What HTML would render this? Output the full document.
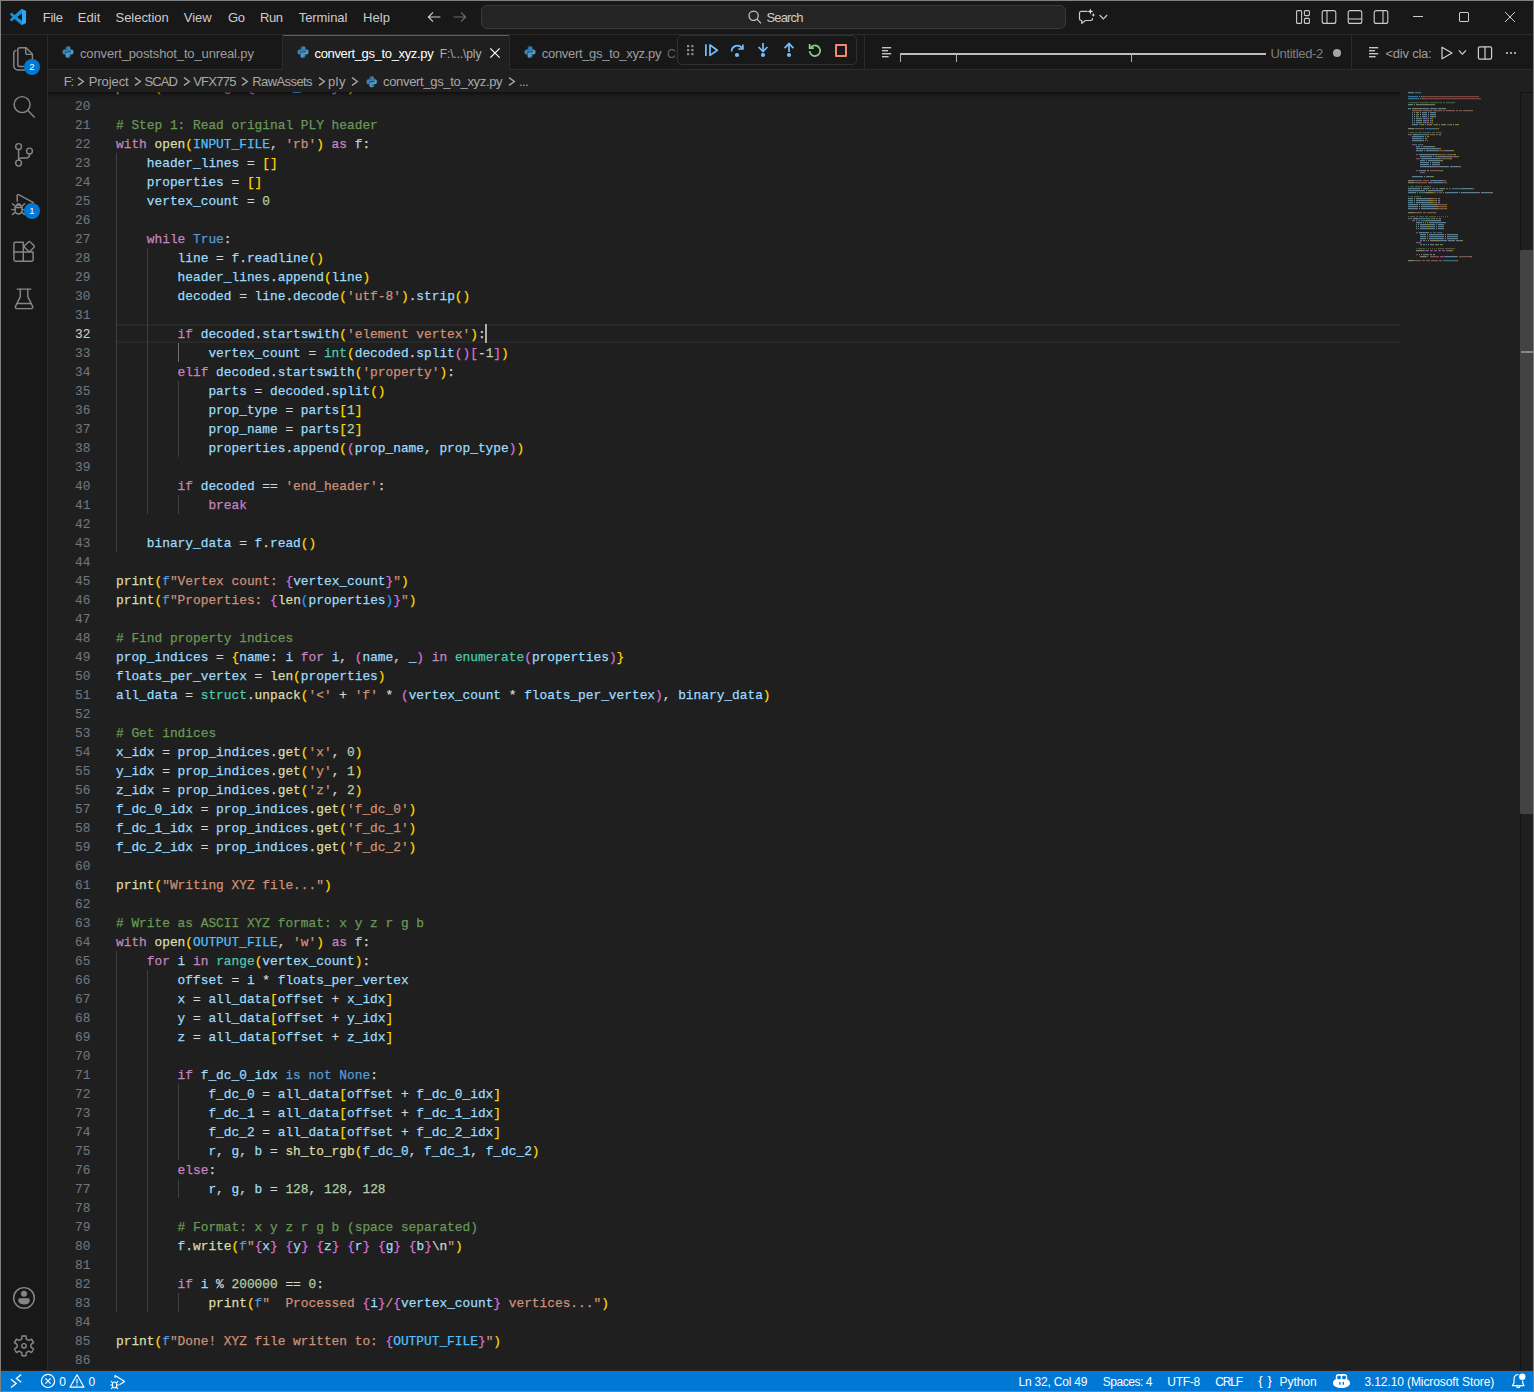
<!DOCTYPE html><html><head><meta charset="utf-8"><title>convert_gs_to_xyz.py</title><style>
*{box-sizing:border-box;margin:0;padding:0}
html,body{width:1534px;height:1392px;overflow:hidden;background:#1f1f1f}
body{font-family:"Liberation Sans",sans-serif;font-size:13px;position:relative}
#w{position:absolute;left:0;top:0;width:1534px;height:1392px;overflow:hidden;background:#1f1f1f}
.a{position:absolute}
.t{position:absolute;white-space:pre;height:20px;line-height:20px}
svg{position:absolute;overflow:visible}
#code{position:absolute;left:116px;top:77.75px;font-family:"Liberation Mono",monospace;font-size:13.5px;line-height:19px;color:#d4d4d4;white-space:pre;transform:scaleX(.9504);transform-origin:0 0;-webkit-text-stroke:.25px}
#code div{height:19px}
#ln{position:absolute;left:48px;top:77.75px;width:42.5px;text-align:right;font-family:"Liberation Mono",monospace;font-size:13.5px;line-height:19px;color:#6e7681;white-space:pre;transform:scaleX(.9504);transform-origin:100% 0;-webkit-text-stroke:.1px}
#ln div{height:19px}
.c{color:#6a9955}.k{color:#c586c0}.b{color:#569cd6}.f{color:#dcdcaa}.t2{color:#4ec9b0}.v{color:#9cdcfe}.C{color:#4fc1ff}.s{color:#ce9178}.n{color:#b5cea8}.e{color:#d4d4d4}
.b1{color:#ffd700}.b2{color:#da70d6}.b3{color:#179fff}
.g{position:absolute;width:1px;background:#404040}
</style></head><body><div id="w">
<div class="a" style="left:116px;top:324px;width:1284px;height:19px;border-top:2px solid #282828;border-bottom:2px solid #282828"></div>
<div class="g" style="left:116px;top:153px;height:399px;background:#404040"></div>
<div class="g" style="left:147px;top:248px;height:266px;background:#404040"></div>
<div class="g" style="left:178px;top:343px;height:19px;background:#707070"></div>
<div class="g" style="left:178px;top:381px;height:76px;background:#404040"></div>
<div class="g" style="left:178px;top:495px;height:19px;background:#404040"></div>
<div class="g" style="left:116px;top:951px;height:361px;background:#404040"></div>
<div class="g" style="left:147px;top:970px;height:342px;background:#404040"></div>
<div class="g" style="left:178px;top:1084px;height:76px;background:#404040"></div>
<div class="g" style="left:178px;top:1179px;height:19px;background:#404040"></div>
<div class="g" style="left:178px;top:1293px;height:19px;background:#404040"></div>
<div id="ln"><div>19</div><div>20</div><div>21</div><div>22</div><div>23</div><div>24</div><div>25</div><div>26</div><div>27</div><div>28</div><div>29</div><div>30</div><div>31</div><div style="color:#cccccc">32</div><div>33</div><div>34</div><div>35</div><div>36</div><div>37</div><div>38</div><div>39</div><div>40</div><div>41</div><div>42</div><div>43</div><div>44</div><div>45</div><div>46</div><div>47</div><div>48</div><div>49</div><div>50</div><div>51</div><div>52</div><div>53</div><div>54</div><div>55</div><div>56</div><div>57</div><div>58</div><div>59</div><div>60</div><div>61</div><div>62</div><div>63</div><div>64</div><div>65</div><div>66</div><div>67</div><div>68</div><div>69</div><div>70</div><div>71</div><div>72</div><div>73</div><div>74</div><div>75</div><div>76</div><div>77</div><div>78</div><div>79</div><div>80</div><div>81</div><div>82</div><div>83</div><div>84</div><div>85</div><div>86</div></div>
<div id="code"><div><span class="f">print</span><span class="b1">(</span><span class="b">f</span><span class="s">"Reading: </span><span class="b2">{</span><span class="C">INPUT_FILE</span><span class="b2">}</span><span class="s">"</span><span class="b1">)</span></div><div></div><div><span class="c"># Step 1: Read original PLY header</span></div><div><span class="k">with</span> <span class="f">open</span><span class="b1">(</span><span class="C">INPUT_FILE</span>, <span class="s">'rb'</span><span class="b1">)</span> <span class="k">as</span> <span class="v">f</span>:</div><div>    <span class="v">header_lines</span> = <span class="b1">[]</span></div><div>    <span class="v">properties</span> = <span class="b1">[]</span></div><div>    <span class="v">vertex_count</span> = <span class="n">0</span></div><div></div><div>    <span class="k">while</span> <span class="b">True</span>:</div><div>        <span class="v">line</span> = <span class="v">f</span>.<span class="v">readline</span><span class="b1">()</span></div><div>        <span class="v">header_lines</span>.<span class="v">append</span><span class="b1">(</span><span class="v">line</span><span class="b1">)</span></div><div>        <span class="v">decoded</span> = <span class="v">line</span>.<span class="v">decode</span><span class="b1">(</span><span class="s">'utf-8'</span><span class="b1">)</span>.<span class="v">strip</span><span class="b1">()</span></div><div></div><div>        <span class="k">if</span> <span class="v">decoded</span>.<span class="v">startswith</span><span class="b1">(</span><span class="s">'element vertex'</span><span class="b1">)</span>:</div><div>            <span class="v">vertex_count</span> = <span class="t2">int</span><span class="b1">(</span><span class="v">decoded</span>.<span class="v">split</span><span class="b2">()[</span>-<span class="n">1</span><span class="b2">]</span><span class="b1">)</span></div><div>        <span class="k">elif</span> <span class="v">decoded</span>.<span class="v">startswith</span><span class="b1">(</span><span class="s">'property'</span><span class="b1">)</span>:</div><div>            <span class="v">parts</span> = <span class="v">decoded</span>.<span class="v">split</span><span class="b1">()</span></div><div>            <span class="v">prop_type</span> = <span class="v">parts</span><span class="b1">[</span><span class="n">1</span><span class="b1">]</span></div><div>            <span class="v">prop_name</span> = <span class="v">parts</span><span class="b1">[</span><span class="n">2</span><span class="b1">]</span></div><div>            <span class="v">properties</span>.<span class="v">append</span><span class="b1">(</span><span class="b2">(</span><span class="v">prop_name</span>, <span class="v">prop_type</span><span class="b2">)</span><span class="b1">)</span></div><div></div><div>        <span class="k">if</span> <span class="v">decoded</span> == <span class="s">'end_header'</span>:</div><div>            <span class="k">break</span></div><div></div><div>    <span class="v">binary_data</span> = <span class="v">f</span>.<span class="v">read</span><span class="b1">()</span></div><div></div><div><span class="f">print</span><span class="b1">(</span><span class="b">f</span><span class="s">"Vertex count: </span><span class="b2">{</span><span class="v">vertex_count</span><span class="b2">}</span><span class="s">"</span><span class="b1">)</span></div><div><span class="f">print</span><span class="b1">(</span><span class="b">f</span><span class="s">"Properties: </span><span class="b2">{</span><span class="f">len</span><span class="b3">(</span><span class="v">properties</span><span class="b3">)</span><span class="b2">}</span><span class="s">"</span><span class="b1">)</span></div><div></div><div><span class="c"># Find property indices</span></div><div><span class="v">prop_indices</span> = <span class="b1">{</span><span class="v">name</span>: <span class="v">i</span> <span class="k">for</span> <span class="v">i</span>, <span class="b2">(</span><span class="v">name</span>, <span class="v">_</span><span class="b2">)</span> <span class="k">in</span> <span class="t2">enumerate</span><span class="b2">(</span><span class="v">properties</span><span class="b2">)</span><span class="b1">}</span></div><div><span class="v">floats_per_vertex</span> = <span class="f">len</span><span class="b1">(</span><span class="v">properties</span><span class="b1">)</span></div><div><span class="v">all_data</span> = <span class="t2">struct</span>.<span class="f">unpack</span><span class="b1">(</span><span class="s">'&lt;'</span> + <span class="s">'f'</span> * <span class="b2">(</span><span class="v">vertex_count</span> * <span class="v">floats_per_vertex</span><span class="b2">)</span>, <span class="v">binary_data</span><span class="b1">)</span></div><div></div><div><span class="c"># Get indices</span></div><div><span class="v">x_idx</span> = <span class="v">prop_indices</span>.<span class="f">get</span><span class="b1">(</span><span class="s">'x'</span>, <span class="n">0</span><span class="b1">)</span></div><div><span class="v">y_idx</span> = <span class="v">prop_indices</span>.<span class="f">get</span><span class="b1">(</span><span class="s">'y'</span>, <span class="n">1</span><span class="b1">)</span></div><div><span class="v">z_idx</span> = <span class="v">prop_indices</span>.<span class="f">get</span><span class="b1">(</span><span class="s">'z'</span>, <span class="n">2</span><span class="b1">)</span></div><div><span class="v">f_dc_0_idx</span> = <span class="v">prop_indices</span>.<span class="f">get</span><span class="b1">(</span><span class="s">'f_dc_0'</span><span class="b1">)</span></div><div><span class="v">f_dc_1_idx</span> = <span class="v">prop_indices</span>.<span class="f">get</span><span class="b1">(</span><span class="s">'f_dc_1'</span><span class="b1">)</span></div><div><span class="v">f_dc_2_idx</span> = <span class="v">prop_indices</span>.<span class="f">get</span><span class="b1">(</span><span class="s">'f_dc_2'</span><span class="b1">)</span></div><div></div><div><span class="f">print</span><span class="b1">(</span><span class="s">"Writing XYZ file..."</span><span class="b1">)</span></div><div></div><div><span class="c"># Write as ASCII XYZ format: x y z r g b</span></div><div><span class="k">with</span> <span class="f">open</span><span class="b1">(</span><span class="C">OUTPUT_FILE</span>, <span class="s">'w'</span><span class="b1">)</span> <span class="k">as</span> <span class="v">f</span>:</div><div>    <span class="k">for</span> <span class="v">i</span> <span class="k">in</span> <span class="t2">range</span><span class="b1">(</span><span class="v">vertex_count</span><span class="b1">)</span>:</div><div>        <span class="v">offset</span> = <span class="v">i</span> * <span class="v">floats_per_vertex</span></div><div>        <span class="v">x</span> = <span class="v">all_data</span><span class="b1">[</span><span class="v">offset</span> + <span class="v">x_idx</span><span class="b1">]</span></div><div>        <span class="v">y</span> = <span class="v">all_data</span><span class="b1">[</span><span class="v">offset</span> + <span class="v">y_idx</span><span class="b1">]</span></div><div>        <span class="v">z</span> = <span class="v">all_data</span><span class="b1">[</span><span class="v">offset</span> + <span class="v">z_idx</span><span class="b1">]</span></div><div></div><div>        <span class="k">if</span> <span class="v">f_dc_0_idx</span> <span class="b">is</span> <span class="b">not</span> <span class="b">None</span>:</div><div>            <span class="v">f_dc_0</span> = <span class="v">all_data</span><span class="b1">[</span><span class="v">offset</span> + <span class="v">f_dc_0_idx</span><span class="b1">]</span></div><div>            <span class="v">f_dc_1</span> = <span class="v">all_data</span><span class="b1">[</span><span class="v">offset</span> + <span class="v">f_dc_1_idx</span><span class="b1">]</span></div><div>            <span class="v">f_dc_2</span> = <span class="v">all_data</span><span class="b1">[</span><span class="v">offset</span> + <span class="v">f_dc_2_idx</span><span class="b1">]</span></div><div>            <span class="v">r</span>, <span class="v">g</span>, <span class="v">b</span> = <span class="f">sh_to_rgb</span><span class="b1">(</span><span class="v">f_dc_0</span>, <span class="v">f_dc_1</span>, <span class="v">f_dc_2</span><span class="b1">)</span></div><div>        <span class="k">else</span>:</div><div>            <span class="v">r</span>, <span class="v">g</span>, <span class="v">b</span> = <span class="n">128</span>, <span class="n">128</span>, <span class="n">128</span></div><div></div><div>        <span class="c"># Format: x y z r g b (space separated)</span></div><div>        <span class="v">f</span>.<span class="f">write</span><span class="b1">(</span><span class="b">f</span><span class="s">"</span><span class="b2">{</span><span class="v">x</span><span class="b2">}</span><span class="s"> </span><span class="b2">{</span><span class="v">y</span><span class="b2">}</span><span class="s"> </span><span class="b2">{</span><span class="v">z</span><span class="b2">}</span><span class="s"> </span><span class="b2">{</span><span class="v">r</span><span class="b2">}</span><span class="s"> </span><span class="b2">{</span><span class="v">g</span><span class="b2">}</span><span class="s"> </span><span class="b2">{</span><span class="v">b</span><span class="b2">}</span><span class="e">\n</span><span class="s">"</span><span class="b1">)</span></div><div></div><div>        <span class="k">if</span> <span class="v">i</span> % <span class="n">200000</span> == <span class="n">0</span>:</div><div>            <span class="f">print</span><span class="b1">(</span><span class="b">f</span><span class="s">"  Processed </span><span class="b2">{</span><span class="v">i</span><span class="b2">}</span><span class="s">/</span><span class="b2">{</span><span class="v">vertex_count</span><span class="b2">}</span><span class="s"> vertices..."</span><span class="b1">)</span></div><div></div><div><span class="f">print</span><span class="b1">(</span><span class="b">f</span><span class="s">"Done! XYZ file written to: </span><span class="b2">{</span><span class="C">OUTPUT_FILE</span><span class="b2">}</span><span class="s">"</span><span class="b1">)</span></div><div></div></div>
<div class="a" style="left:485px;top:324px;width:2px;height:19px;background:#aeafad"></div>
<svg style="left:1408px;top:92px;opacity:.5" width="110" height="180"><rect x="0" y="0" width="6" height="1.25" fill="#9cdcfe"/><rect x="7" y="0" width="6" height="1.25" fill="#4ec9b0"/><rect x="0" y="4" width="10" height="1.25" fill="#4fc1ff"/><rect x="11" y="4" width="1" height="1.25" fill="#d4d4d4"/><rect x="13" y="4" width="1" height="1.25" fill="#9cdcfe"/><rect x="14" y="4" width="57" height="1.25" fill="#d16969"/><rect x="0" y="6" width="11" height="1.25" fill="#4fc1ff"/><rect x="12" y="6" width="1" height="1.25" fill="#d4d4d4"/><rect x="14" y="6" width="1" height="1.25" fill="#9cdcfe"/><rect x="15" y="6" width="58" height="1.25" fill="#d16969"/><rect x="0" y="10" width="1" height="1.25" fill="#6a9955"/><rect x="2" y="10" width="9" height="1.25" fill="#6a9955"/><rect x="12" y="10" width="9" height="1.25" fill="#6a9955"/><rect x="22" y="10" width="8" height="1.25" fill="#6a9955"/><rect x="31" y="10" width="3" height="1.25" fill="#6a9955"/><rect x="35" y="10" width="2" height="1.25" fill="#6a9955"/><rect x="38" y="10" width="9" height="1.25" fill="#6a9955"/><rect x="0" y="12" width="5" height="1.25" fill="#9cdcfe"/><rect x="6" y="12" width="1" height="1.25" fill="#d4d4d4"/><rect x="8" y="12" width="1" height="1.25" fill="#b5cea8"/><rect x="9" y="12" width="1" height="1.25" fill="#d4d4d4"/><rect x="10" y="12" width="17" height="1.25" fill="#b5cea8"/><rect x="0" y="16" width="3" height="1.25" fill="#9cdcfe"/><rect x="4" y="16" width="9" height="1.25" fill="#dcdcaa"/><rect x="13" y="16" width="1" height="1.25" fill="#ffd700"/><rect x="14" y="16" width="6" height="1.25" fill="#9cdcfe"/><rect x="20" y="16" width="1" height="1.25" fill="#d4d4d4"/><rect x="22" y="16" width="6" height="1.25" fill="#9cdcfe"/><rect x="28" y="16" width="1" height="1.25" fill="#d4d4d4"/><rect x="30" y="16" width="6" height="1.25" fill="#9cdcfe"/><rect x="36" y="16" width="1" height="1.25" fill="#ffd700"/><rect x="37" y="16" width="1" height="1.25" fill="#d4d4d4"/><rect x="4" y="18" width="10" height="1.25" fill="#ce9178"/><rect x="15" y="18" width="9" height="1.25" fill="#ce9178"/><rect x="25" y="18" width="9" height="1.25" fill="#ce9178"/><rect x="35" y="18" width="2" height="1.25" fill="#ce9178"/><rect x="38" y="18" width="9" height="1.25" fill="#ce9178"/><rect x="48" y="18" width="2" height="1.25" fill="#ce9178"/><rect x="51" y="18" width="3" height="1.25" fill="#ce9178"/><rect x="55" y="18" width="10" height="1.25" fill="#ce9178"/><rect x="4" y="20" width="1" height="1.25" fill="#9cdcfe"/><rect x="6" y="20" width="1" height="1.25" fill="#d4d4d4"/><rect x="8" y="20" width="1" height="1.25" fill="#b5cea8"/><rect x="9" y="20" width="1" height="1.25" fill="#d4d4d4"/><rect x="10" y="20" width="1" height="1.25" fill="#b5cea8"/><rect x="12" y="20" width="1" height="1.25" fill="#d4d4d4"/><rect x="14" y="20" width="5" height="1.25" fill="#9cdcfe"/><rect x="20" y="20" width="1" height="1.25" fill="#d4d4d4"/><rect x="22" y="20" width="6" height="1.25" fill="#9cdcfe"/><rect x="4" y="22" width="1" height="1.25" fill="#9cdcfe"/><rect x="6" y="22" width="1" height="1.25" fill="#d4d4d4"/><rect x="8" y="22" width="1" height="1.25" fill="#b5cea8"/><rect x="9" y="22" width="1" height="1.25" fill="#d4d4d4"/><rect x="10" y="22" width="1" height="1.25" fill="#b5cea8"/><rect x="12" y="22" width="1" height="1.25" fill="#d4d4d4"/><rect x="14" y="22" width="5" height="1.25" fill="#9cdcfe"/><rect x="20" y="22" width="1" height="1.25" fill="#d4d4d4"/><rect x="22" y="22" width="6" height="1.25" fill="#9cdcfe"/><rect x="4" y="24" width="1" height="1.25" fill="#9cdcfe"/><rect x="6" y="24" width="1" height="1.25" fill="#d4d4d4"/><rect x="8" y="24" width="1" height="1.25" fill="#b5cea8"/><rect x="9" y="24" width="1" height="1.25" fill="#d4d4d4"/><rect x="10" y="24" width="1" height="1.25" fill="#b5cea8"/><rect x="12" y="24" width="1" height="1.25" fill="#d4d4d4"/><rect x="14" y="24" width="5" height="1.25" fill="#9cdcfe"/><rect x="20" y="24" width="1" height="1.25" fill="#d4d4d4"/><rect x="22" y="24" width="6" height="1.25" fill="#9cdcfe"/><rect x="4" y="26" width="1" height="1.25" fill="#9cdcfe"/><rect x="6" y="26" width="1" height="1.25" fill="#d4d4d4"/><rect x="8" y="26" width="3" height="1.25" fill="#9cdcfe"/><rect x="11" y="26" width="1" height="1.25" fill="#ffd700"/><rect x="12" y="26" width="1" height="1.25" fill="#b5cea8"/><rect x="13" y="26" width="1" height="1.25" fill="#d4d4d4"/><rect x="15" y="26" width="3" height="1.25" fill="#9cdcfe"/><rect x="18" y="26" width="1" height="1.25" fill="#da70d6"/><rect x="19" y="26" width="1" height="1.25" fill="#b5cea8"/><rect x="20" y="26" width="1" height="1.25" fill="#d4d4d4"/><rect x="22" y="26" width="1" height="1.25" fill="#9cdcfe"/><rect x="23" y="26" width="1" height="1.25" fill="#da70d6"/><rect x="24" y="26" width="1" height="1.25" fill="#ffd700"/><rect x="4" y="28" width="1" height="1.25" fill="#9cdcfe"/><rect x="6" y="28" width="1" height="1.25" fill="#d4d4d4"/><rect x="8" y="28" width="3" height="1.25" fill="#9cdcfe"/><rect x="11" y="28" width="1" height="1.25" fill="#ffd700"/><rect x="12" y="28" width="1" height="1.25" fill="#b5cea8"/><rect x="13" y="28" width="1" height="1.25" fill="#d4d4d4"/><rect x="15" y="28" width="3" height="1.25" fill="#9cdcfe"/><rect x="18" y="28" width="1" height="1.25" fill="#da70d6"/><rect x="19" y="28" width="1" height="1.25" fill="#b5cea8"/><rect x="20" y="28" width="1" height="1.25" fill="#d4d4d4"/><rect x="22" y="28" width="1" height="1.25" fill="#9cdcfe"/><rect x="23" y="28" width="1" height="1.25" fill="#da70d6"/><rect x="24" y="28" width="1" height="1.25" fill="#ffd700"/><rect x="4" y="30" width="1" height="1.25" fill="#9cdcfe"/><rect x="6" y="30" width="1" height="1.25" fill="#d4d4d4"/><rect x="8" y="30" width="3" height="1.25" fill="#9cdcfe"/><rect x="11" y="30" width="1" height="1.25" fill="#ffd700"/><rect x="12" y="30" width="1" height="1.25" fill="#b5cea8"/><rect x="13" y="30" width="1" height="1.25" fill="#d4d4d4"/><rect x="15" y="30" width="3" height="1.25" fill="#9cdcfe"/><rect x="18" y="30" width="1" height="1.25" fill="#da70d6"/><rect x="19" y="30" width="1" height="1.25" fill="#b5cea8"/><rect x="20" y="30" width="1" height="1.25" fill="#d4d4d4"/><rect x="22" y="30" width="1" height="1.25" fill="#9cdcfe"/><rect x="23" y="30" width="1" height="1.25" fill="#da70d6"/><rect x="24" y="30" width="1" height="1.25" fill="#ffd700"/><rect x="4" y="32" width="6" height="1.25" fill="#9cdcfe"/><rect x="11" y="32" width="3" height="1.25" fill="#4ec9b0"/><rect x="14" y="32" width="1" height="1.25" fill="#ffd700"/><rect x="15" y="32" width="1" height="1.25" fill="#9cdcfe"/><rect x="17" y="32" width="1" height="1.25" fill="#d4d4d4"/><rect x="19" y="32" width="3" height="1.25" fill="#b5cea8"/><rect x="22" y="32" width="1" height="1.25" fill="#ffd700"/><rect x="23" y="32" width="1" height="1.25" fill="#d4d4d4"/><rect x="25" y="32" width="3" height="1.25" fill="#4ec9b0"/><rect x="28" y="32" width="1" height="1.25" fill="#ffd700"/><rect x="29" y="32" width="1" height="1.25" fill="#9cdcfe"/><rect x="31" y="32" width="1" height="1.25" fill="#d4d4d4"/><rect x="33" y="32" width="3" height="1.25" fill="#b5cea8"/><rect x="36" y="32" width="1" height="1.25" fill="#ffd700"/><rect x="37" y="32" width="1" height="1.25" fill="#d4d4d4"/><rect x="39" y="32" width="3" height="1.25" fill="#4ec9b0"/><rect x="42" y="32" width="1" height="1.25" fill="#ffd700"/><rect x="43" y="32" width="1" height="1.25" fill="#9cdcfe"/><rect x="45" y="32" width="1" height="1.25" fill="#d4d4d4"/><rect x="47" y="32" width="3" height="1.25" fill="#b5cea8"/><rect x="50" y="32" width="1" height="1.25" fill="#ffd700"/><rect x="0" y="36" width="5" height="1.25" fill="#dcdcaa"/><rect x="5" y="36" width="1" height="1.25" fill="#ffd700"/><rect x="6" y="36" width="1" height="1.25" fill="#569cd6"/><rect x="7" y="36" width="9" height="1.25" fill="#ce9178"/><rect x="17" y="36" width="1" height="1.25" fill="#da70d6"/><rect x="18" y="36" width="10" height="1.25" fill="#4fc1ff"/><rect x="28" y="36" width="1" height="1.25" fill="#da70d6"/><rect x="29" y="36" width="1" height="1.25" fill="#ce9178"/><rect x="30" y="36" width="1" height="1.25" fill="#ffd700"/><rect x="0" y="40" width="1" height="1.25" fill="#6a9955"/><rect x="2" y="40" width="4" height="1.25" fill="#6a9955"/><rect x="7" y="40" width="2" height="1.25" fill="#6a9955"/><rect x="10" y="40" width="4" height="1.25" fill="#6a9955"/><rect x="15" y="40" width="8" height="1.25" fill="#6a9955"/><rect x="24" y="40" width="3" height="1.25" fill="#6a9955"/><rect x="28" y="40" width="6" height="1.25" fill="#6a9955"/><rect x="0" y="42" width="4" height="1.25" fill="#c586c0"/><rect x="5" y="42" width="4" height="1.25" fill="#dcdcaa"/><rect x="9" y="42" width="1" height="1.25" fill="#ffd700"/><rect x="10" y="42" width="10" height="1.25" fill="#4fc1ff"/><rect x="20" y="42" width="1" height="1.25" fill="#d4d4d4"/><rect x="22" y="42" width="4" height="1.25" fill="#ce9178"/><rect x="26" y="42" width="1" height="1.25" fill="#ffd700"/><rect x="28" y="42" width="2" height="1.25" fill="#c586c0"/><rect x="31" y="42" width="1" height="1.25" fill="#9cdcfe"/><rect x="32" y="42" width="1" height="1.25" fill="#d4d4d4"/><rect x="4" y="44" width="12" height="1.25" fill="#9cdcfe"/><rect x="17" y="44" width="1" height="1.25" fill="#d4d4d4"/><rect x="19" y="44" width="2" height="1.25" fill="#ffd700"/><rect x="4" y="46" width="10" height="1.25" fill="#9cdcfe"/><rect x="15" y="46" width="1" height="1.25" fill="#d4d4d4"/><rect x="17" y="46" width="2" height="1.25" fill="#ffd700"/><rect x="4" y="48" width="12" height="1.25" fill="#9cdcfe"/><rect x="17" y="48" width="1" height="1.25" fill="#d4d4d4"/><rect x="19" y="48" width="1" height="1.25" fill="#b5cea8"/><rect x="4" y="52" width="5" height="1.25" fill="#c586c0"/><rect x="10" y="52" width="4" height="1.25" fill="#569cd6"/><rect x="14" y="52" width="1" height="1.25" fill="#d4d4d4"/><rect x="8" y="54" width="4" height="1.25" fill="#9cdcfe"/><rect x="13" y="54" width="1" height="1.25" fill="#d4d4d4"/><rect x="15" y="54" width="1" height="1.25" fill="#9cdcfe"/><rect x="16" y="54" width="1" height="1.25" fill="#d4d4d4"/><rect x="17" y="54" width="8" height="1.25" fill="#9cdcfe"/><rect x="25" y="54" width="2" height="1.25" fill="#ffd700"/><rect x="8" y="56" width="12" height="1.25" fill="#9cdcfe"/><rect x="20" y="56" width="1" height="1.25" fill="#d4d4d4"/><rect x="21" y="56" width="6" height="1.25" fill="#9cdcfe"/><rect x="27" y="56" width="1" height="1.25" fill="#ffd700"/><rect x="28" y="56" width="4" height="1.25" fill="#9cdcfe"/><rect x="32" y="56" width="1" height="1.25" fill="#ffd700"/><rect x="8" y="58" width="7" height="1.25" fill="#9cdcfe"/><rect x="16" y="58" width="1" height="1.25" fill="#d4d4d4"/><rect x="18" y="58" width="4" height="1.25" fill="#9cdcfe"/><rect x="22" y="58" width="1" height="1.25" fill="#d4d4d4"/><rect x="23" y="58" width="6" height="1.25" fill="#9cdcfe"/><rect x="29" y="58" width="1" height="1.25" fill="#ffd700"/><rect x="30" y="58" width="7" height="1.25" fill="#ce9178"/><rect x="37" y="58" width="1" height="1.25" fill="#ffd700"/><rect x="38" y="58" width="1" height="1.25" fill="#d4d4d4"/><rect x="39" y="58" width="5" height="1.25" fill="#9cdcfe"/><rect x="44" y="58" width="2" height="1.25" fill="#ffd700"/><rect x="8" y="62" width="2" height="1.25" fill="#c586c0"/><rect x="11" y="62" width="7" height="1.25" fill="#9cdcfe"/><rect x="18" y="62" width="1" height="1.25" fill="#d4d4d4"/><rect x="19" y="62" width="10" height="1.25" fill="#9cdcfe"/><rect x="29" y="62" width="1" height="1.25" fill="#ffd700"/><rect x="30" y="62" width="8" height="1.25" fill="#ce9178"/><rect x="39" y="62" width="7" height="1.25" fill="#ce9178"/><rect x="46" y="62" width="1" height="1.25" fill="#ffd700"/><rect x="47" y="62" width="1" height="1.25" fill="#d4d4d4"/><rect x="12" y="64" width="12" height="1.25" fill="#9cdcfe"/><rect x="25" y="64" width="1" height="1.25" fill="#d4d4d4"/><rect x="27" y="64" width="3" height="1.25" fill="#4ec9b0"/><rect x="30" y="64" width="1" height="1.25" fill="#ffd700"/><rect x="31" y="64" width="7" height="1.25" fill="#9cdcfe"/><rect x="38" y="64" width="1" height="1.25" fill="#d4d4d4"/><rect x="39" y="64" width="5" height="1.25" fill="#9cdcfe"/><rect x="44" y="64" width="3" height="1.25" fill="#da70d6"/><rect x="47" y="64" width="1" height="1.25" fill="#d4d4d4"/><rect x="48" y="64" width="1" height="1.25" fill="#b5cea8"/><rect x="49" y="64" width="1" height="1.25" fill="#da70d6"/><rect x="50" y="64" width="1" height="1.25" fill="#ffd700"/><rect x="8" y="66" width="4" height="1.25" fill="#c586c0"/><rect x="13" y="66" width="7" height="1.25" fill="#9cdcfe"/><rect x="20" y="66" width="1" height="1.25" fill="#d4d4d4"/><rect x="21" y="66" width="10" height="1.25" fill="#9cdcfe"/><rect x="31" y="66" width="1" height="1.25" fill="#ffd700"/><rect x="32" y="66" width="10" height="1.25" fill="#ce9178"/><rect x="42" y="66" width="1" height="1.25" fill="#ffd700"/><rect x="43" y="66" width="1" height="1.25" fill="#d4d4d4"/><rect x="12" y="68" width="5" height="1.25" fill="#9cdcfe"/><rect x="18" y="68" width="1" height="1.25" fill="#d4d4d4"/><rect x="20" y="68" width="7" height="1.25" fill="#9cdcfe"/><rect x="27" y="68" width="1" height="1.25" fill="#d4d4d4"/><rect x="28" y="68" width="5" height="1.25" fill="#9cdcfe"/><rect x="33" y="68" width="2" height="1.25" fill="#ffd700"/><rect x="12" y="70" width="9" height="1.25" fill="#9cdcfe"/><rect x="22" y="70" width="1" height="1.25" fill="#d4d4d4"/><rect x="24" y="70" width="5" height="1.25" fill="#9cdcfe"/><rect x="29" y="70" width="1" height="1.25" fill="#ffd700"/><rect x="30" y="70" width="1" height="1.25" fill="#b5cea8"/><rect x="31" y="70" width="1" height="1.25" fill="#ffd700"/><rect x="12" y="72" width="9" height="1.25" fill="#9cdcfe"/><rect x="22" y="72" width="1" height="1.25" fill="#d4d4d4"/><rect x="24" y="72" width="5" height="1.25" fill="#9cdcfe"/><rect x="29" y="72" width="1" height="1.25" fill="#ffd700"/><rect x="30" y="72" width="1" height="1.25" fill="#b5cea8"/><rect x="31" y="72" width="1" height="1.25" fill="#ffd700"/><rect x="12" y="74" width="10" height="1.25" fill="#9cdcfe"/><rect x="22" y="74" width="1" height="1.25" fill="#d4d4d4"/><rect x="23" y="74" width="6" height="1.25" fill="#9cdcfe"/><rect x="29" y="74" width="1" height="1.25" fill="#ffd700"/><rect x="30" y="74" width="1" height="1.25" fill="#da70d6"/><rect x="31" y="74" width="9" height="1.25" fill="#9cdcfe"/><rect x="40" y="74" width="1" height="1.25" fill="#d4d4d4"/><rect x="42" y="74" width="9" height="1.25" fill="#9cdcfe"/><rect x="51" y="74" width="1" height="1.25" fill="#da70d6"/><rect x="52" y="74" width="1" height="1.25" fill="#ffd700"/><rect x="8" y="78" width="2" height="1.25" fill="#c586c0"/><rect x="11" y="78" width="7" height="1.25" fill="#9cdcfe"/><rect x="19" y="78" width="2" height="1.25" fill="#d4d4d4"/><rect x="22" y="78" width="12" height="1.25" fill="#ce9178"/><rect x="34" y="78" width="1" height="1.25" fill="#d4d4d4"/><rect x="12" y="80" width="5" height="1.25" fill="#c586c0"/><rect x="4" y="84" width="11" height="1.25" fill="#9cdcfe"/><rect x="16" y="84" width="1" height="1.25" fill="#d4d4d4"/><rect x="18" y="84" width="1" height="1.25" fill="#9cdcfe"/><rect x="19" y="84" width="1" height="1.25" fill="#d4d4d4"/><rect x="20" y="84" width="4" height="1.25" fill="#9cdcfe"/><rect x="24" y="84" width="2" height="1.25" fill="#ffd700"/><rect x="0" y="88" width="5" height="1.25" fill="#dcdcaa"/><rect x="5" y="88" width="1" height="1.25" fill="#ffd700"/><rect x="6" y="88" width="1" height="1.25" fill="#569cd6"/><rect x="7" y="88" width="7" height="1.25" fill="#ce9178"/><rect x="15" y="88" width="6" height="1.25" fill="#ce9178"/><rect x="22" y="88" width="1" height="1.25" fill="#da70d6"/><rect x="23" y="88" width="12" height="1.25" fill="#9cdcfe"/><rect x="35" y="88" width="1" height="1.25" fill="#da70d6"/><rect x="36" y="88" width="1" height="1.25" fill="#ce9178"/><rect x="37" y="88" width="1" height="1.25" fill="#ffd700"/><rect x="0" y="90" width="5" height="1.25" fill="#dcdcaa"/><rect x="5" y="90" width="1" height="1.25" fill="#ffd700"/><rect x="6" y="90" width="1" height="1.25" fill="#569cd6"/><rect x="7" y="90" width="12" height="1.25" fill="#ce9178"/><rect x="20" y="90" width="1" height="1.25" fill="#da70d6"/><rect x="21" y="90" width="3" height="1.25" fill="#dcdcaa"/><rect x="24" y="90" width="1" height="1.25" fill="#179fff"/><rect x="25" y="90" width="10" height="1.25" fill="#9cdcfe"/><rect x="35" y="90" width="1" height="1.25" fill="#179fff"/><rect x="36" y="90" width="1" height="1.25" fill="#da70d6"/><rect x="37" y="90" width="1" height="1.25" fill="#ce9178"/><rect x="38" y="90" width="1" height="1.25" fill="#ffd700"/><rect x="0" y="94" width="1" height="1.25" fill="#6a9955"/><rect x="2" y="94" width="4" height="1.25" fill="#6a9955"/><rect x="7" y="94" width="8" height="1.25" fill="#6a9955"/><rect x="16" y="94" width="7" height="1.25" fill="#6a9955"/><rect x="0" y="96" width="12" height="1.25" fill="#9cdcfe"/><rect x="13" y="96" width="1" height="1.25" fill="#d4d4d4"/><rect x="15" y="96" width="1" height="1.25" fill="#ffd700"/><rect x="16" y="96" width="4" height="1.25" fill="#9cdcfe"/><rect x="20" y="96" width="1" height="1.25" fill="#d4d4d4"/><rect x="22" y="96" width="1" height="1.25" fill="#9cdcfe"/><rect x="24" y="96" width="3" height="1.25" fill="#c586c0"/><rect x="28" y="96" width="1" height="1.25" fill="#9cdcfe"/><rect x="29" y="96" width="1" height="1.25" fill="#d4d4d4"/><rect x="31" y="96" width="1" height="1.25" fill="#da70d6"/><rect x="32" y="96" width="4" height="1.25" fill="#9cdcfe"/><rect x="36" y="96" width="1" height="1.25" fill="#d4d4d4"/><rect x="38" y="96" width="1" height="1.25" fill="#9cdcfe"/><rect x="39" y="96" width="1" height="1.25" fill="#da70d6"/><rect x="41" y="96" width="2" height="1.25" fill="#c586c0"/><rect x="44" y="96" width="9" height="1.25" fill="#4ec9b0"/><rect x="53" y="96" width="1" height="1.25" fill="#da70d6"/><rect x="54" y="96" width="10" height="1.25" fill="#9cdcfe"/><rect x="64" y="96" width="1" height="1.25" fill="#da70d6"/><rect x="65" y="96" width="1" height="1.25" fill="#ffd700"/><rect x="0" y="98" width="17" height="1.25" fill="#9cdcfe"/><rect x="18" y="98" width="1" height="1.25" fill="#d4d4d4"/><rect x="20" y="98" width="3" height="1.25" fill="#dcdcaa"/><rect x="23" y="98" width="1" height="1.25" fill="#ffd700"/><rect x="24" y="98" width="10" height="1.25" fill="#9cdcfe"/><rect x="34" y="98" width="1" height="1.25" fill="#ffd700"/><rect x="0" y="100" width="8" height="1.25" fill="#9cdcfe"/><rect x="9" y="100" width="1" height="1.25" fill="#d4d4d4"/><rect x="11" y="100" width="6" height="1.25" fill="#4ec9b0"/><rect x="17" y="100" width="1" height="1.25" fill="#d4d4d4"/><rect x="18" y="100" width="6" height="1.25" fill="#dcdcaa"/><rect x="24" y="100" width="1" height="1.25" fill="#ffd700"/><rect x="25" y="100" width="3" height="1.25" fill="#ce9178"/><rect x="29" y="100" width="1" height="1.25" fill="#d4d4d4"/><rect x="31" y="100" width="3" height="1.25" fill="#ce9178"/><rect x="35" y="100" width="1" height="1.25" fill="#d4d4d4"/><rect x="37" y="100" width="1" height="1.25" fill="#da70d6"/><rect x="38" y="100" width="12" height="1.25" fill="#9cdcfe"/><rect x="51" y="100" width="1" height="1.25" fill="#d4d4d4"/><rect x="53" y="100" width="17" height="1.25" fill="#9cdcfe"/><rect x="70" y="100" width="1" height="1.25" fill="#da70d6"/><rect x="71" y="100" width="1" height="1.25" fill="#d4d4d4"/><rect x="73" y="100" width="11" height="1.25" fill="#9cdcfe"/><rect x="84" y="100" width="1" height="1.25" fill="#ffd700"/><rect x="0" y="104" width="1" height="1.25" fill="#6a9955"/><rect x="2" y="104" width="3" height="1.25" fill="#6a9955"/><rect x="6" y="104" width="7" height="1.25" fill="#6a9955"/><rect x="0" y="106" width="5" height="1.25" fill="#9cdcfe"/><rect x="6" y="106" width="1" height="1.25" fill="#d4d4d4"/><rect x="8" y="106" width="12" height="1.25" fill="#9cdcfe"/><rect x="20" y="106" width="1" height="1.25" fill="#d4d4d4"/><rect x="21" y="106" width="3" height="1.25" fill="#dcdcaa"/><rect x="24" y="106" width="1" height="1.25" fill="#ffd700"/><rect x="25" y="106" width="3" height="1.25" fill="#ce9178"/><rect x="28" y="106" width="1" height="1.25" fill="#d4d4d4"/><rect x="30" y="106" width="1" height="1.25" fill="#b5cea8"/><rect x="31" y="106" width="1" height="1.25" fill="#ffd700"/><rect x="0" y="108" width="5" height="1.25" fill="#9cdcfe"/><rect x="6" y="108" width="1" height="1.25" fill="#d4d4d4"/><rect x="8" y="108" width="12" height="1.25" fill="#9cdcfe"/><rect x="20" y="108" width="1" height="1.25" fill="#d4d4d4"/><rect x="21" y="108" width="3" height="1.25" fill="#dcdcaa"/><rect x="24" y="108" width="1" height="1.25" fill="#ffd700"/><rect x="25" y="108" width="3" height="1.25" fill="#ce9178"/><rect x="28" y="108" width="1" height="1.25" fill="#d4d4d4"/><rect x="30" y="108" width="1" height="1.25" fill="#b5cea8"/><rect x="31" y="108" width="1" height="1.25" fill="#ffd700"/><rect x="0" y="110" width="5" height="1.25" fill="#9cdcfe"/><rect x="6" y="110" width="1" height="1.25" fill="#d4d4d4"/><rect x="8" y="110" width="12" height="1.25" fill="#9cdcfe"/><rect x="20" y="110" width="1" height="1.25" fill="#d4d4d4"/><rect x="21" y="110" width="3" height="1.25" fill="#dcdcaa"/><rect x="24" y="110" width="1" height="1.25" fill="#ffd700"/><rect x="25" y="110" width="3" height="1.25" fill="#ce9178"/><rect x="28" y="110" width="1" height="1.25" fill="#d4d4d4"/><rect x="30" y="110" width="1" height="1.25" fill="#b5cea8"/><rect x="31" y="110" width="1" height="1.25" fill="#ffd700"/><rect x="0" y="112" width="10" height="1.25" fill="#9cdcfe"/><rect x="11" y="112" width="1" height="1.25" fill="#d4d4d4"/><rect x="13" y="112" width="12" height="1.25" fill="#9cdcfe"/><rect x="25" y="112" width="1" height="1.25" fill="#d4d4d4"/><rect x="26" y="112" width="3" height="1.25" fill="#dcdcaa"/><rect x="29" y="112" width="1" height="1.25" fill="#ffd700"/><rect x="30" y="112" width="8" height="1.25" fill="#ce9178"/><rect x="38" y="112" width="1" height="1.25" fill="#ffd700"/><rect x="0" y="114" width="10" height="1.25" fill="#9cdcfe"/><rect x="11" y="114" width="1" height="1.25" fill="#d4d4d4"/><rect x="13" y="114" width="12" height="1.25" fill="#9cdcfe"/><rect x="25" y="114" width="1" height="1.25" fill="#d4d4d4"/><rect x="26" y="114" width="3" height="1.25" fill="#dcdcaa"/><rect x="29" y="114" width="1" height="1.25" fill="#ffd700"/><rect x="30" y="114" width="8" height="1.25" fill="#ce9178"/><rect x="38" y="114" width="1" height="1.25" fill="#ffd700"/><rect x="0" y="116" width="10" height="1.25" fill="#9cdcfe"/><rect x="11" y="116" width="1" height="1.25" fill="#d4d4d4"/><rect x="13" y="116" width="12" height="1.25" fill="#9cdcfe"/><rect x="25" y="116" width="1" height="1.25" fill="#d4d4d4"/><rect x="26" y="116" width="3" height="1.25" fill="#dcdcaa"/><rect x="29" y="116" width="1" height="1.25" fill="#ffd700"/><rect x="30" y="116" width="8" height="1.25" fill="#ce9178"/><rect x="38" y="116" width="1" height="1.25" fill="#ffd700"/><rect x="0" y="120" width="5" height="1.25" fill="#dcdcaa"/><rect x="5" y="120" width="1" height="1.25" fill="#ffd700"/><rect x="6" y="120" width="8" height="1.25" fill="#ce9178"/><rect x="15" y="120" width="3" height="1.25" fill="#ce9178"/><rect x="19" y="120" width="8" height="1.25" fill="#ce9178"/><rect x="27" y="120" width="1" height="1.25" fill="#ffd700"/><rect x="0" y="124" width="1" height="1.25" fill="#6a9955"/><rect x="2" y="124" width="5" height="1.25" fill="#6a9955"/><rect x="8" y="124" width="2" height="1.25" fill="#6a9955"/><rect x="11" y="124" width="5" height="1.25" fill="#6a9955"/><rect x="17" y="124" width="3" height="1.25" fill="#6a9955"/><rect x="21" y="124" width="7" height="1.25" fill="#6a9955"/><rect x="29" y="124" width="1" height="1.25" fill="#6a9955"/><rect x="31" y="124" width="1" height="1.25" fill="#6a9955"/><rect x="33" y="124" width="1" height="1.25" fill="#6a9955"/><rect x="35" y="124" width="1" height="1.25" fill="#6a9955"/><rect x="37" y="124" width="1" height="1.25" fill="#6a9955"/><rect x="39" y="124" width="1" height="1.25" fill="#6a9955"/><rect x="0" y="126" width="4" height="1.25" fill="#c586c0"/><rect x="5" y="126" width="4" height="1.25" fill="#dcdcaa"/><rect x="9" y="126" width="1" height="1.25" fill="#ffd700"/><rect x="10" y="126" width="11" height="1.25" fill="#4fc1ff"/><rect x="21" y="126" width="1" height="1.25" fill="#d4d4d4"/><rect x="23" y="126" width="3" height="1.25" fill="#ce9178"/><rect x="26" y="126" width="1" height="1.25" fill="#ffd700"/><rect x="28" y="126" width="2" height="1.25" fill="#c586c0"/><rect x="31" y="126" width="1" height="1.25" fill="#9cdcfe"/><rect x="32" y="126" width="1" height="1.25" fill="#d4d4d4"/><rect x="4" y="128" width="3" height="1.25" fill="#c586c0"/><rect x="8" y="128" width="1" height="1.25" fill="#9cdcfe"/><rect x="10" y="128" width="2" height="1.25" fill="#c586c0"/><rect x="13" y="128" width="5" height="1.25" fill="#4ec9b0"/><rect x="18" y="128" width="1" height="1.25" fill="#ffd700"/><rect x="19" y="128" width="12" height="1.25" fill="#9cdcfe"/><rect x="31" y="128" width="1" height="1.25" fill="#ffd700"/><rect x="32" y="128" width="1" height="1.25" fill="#d4d4d4"/><rect x="8" y="130" width="6" height="1.25" fill="#9cdcfe"/><rect x="15" y="130" width="1" height="1.25" fill="#d4d4d4"/><rect x="17" y="130" width="1" height="1.25" fill="#9cdcfe"/><rect x="19" y="130" width="1" height="1.25" fill="#d4d4d4"/><rect x="21" y="130" width="17" height="1.25" fill="#9cdcfe"/><rect x="8" y="132" width="1" height="1.25" fill="#9cdcfe"/><rect x="10" y="132" width="1" height="1.25" fill="#d4d4d4"/><rect x="12" y="132" width="8" height="1.25" fill="#9cdcfe"/><rect x="20" y="132" width="1" height="1.25" fill="#ffd700"/><rect x="21" y="132" width="6" height="1.25" fill="#9cdcfe"/><rect x="28" y="132" width="1" height="1.25" fill="#d4d4d4"/><rect x="30" y="132" width="5" height="1.25" fill="#9cdcfe"/><rect x="35" y="132" width="1" height="1.25" fill="#ffd700"/><rect x="8" y="134" width="1" height="1.25" fill="#9cdcfe"/><rect x="10" y="134" width="1" height="1.25" fill="#d4d4d4"/><rect x="12" y="134" width="8" height="1.25" fill="#9cdcfe"/><rect x="20" y="134" width="1" height="1.25" fill="#ffd700"/><rect x="21" y="134" width="6" height="1.25" fill="#9cdcfe"/><rect x="28" y="134" width="1" height="1.25" fill="#d4d4d4"/><rect x="30" y="134" width="5" height="1.25" fill="#9cdcfe"/><rect x="35" y="134" width="1" height="1.25" fill="#ffd700"/><rect x="8" y="136" width="1" height="1.25" fill="#9cdcfe"/><rect x="10" y="136" width="1" height="1.25" fill="#d4d4d4"/><rect x="12" y="136" width="8" height="1.25" fill="#9cdcfe"/><rect x="20" y="136" width="1" height="1.25" fill="#ffd700"/><rect x="21" y="136" width="6" height="1.25" fill="#9cdcfe"/><rect x="28" y="136" width="1" height="1.25" fill="#d4d4d4"/><rect x="30" y="136" width="5" height="1.25" fill="#9cdcfe"/><rect x="35" y="136" width="1" height="1.25" fill="#ffd700"/><rect x="8" y="140" width="2" height="1.25" fill="#c586c0"/><rect x="11" y="140" width="10" height="1.25" fill="#9cdcfe"/><rect x="22" y="140" width="2" height="1.25" fill="#569cd6"/><rect x="25" y="140" width="3" height="1.25" fill="#569cd6"/><rect x="29" y="140" width="4" height="1.25" fill="#569cd6"/><rect x="33" y="140" width="1" height="1.25" fill="#d4d4d4"/><rect x="12" y="142" width="6" height="1.25" fill="#9cdcfe"/><rect x="19" y="142" width="1" height="1.25" fill="#d4d4d4"/><rect x="21" y="142" width="8" height="1.25" fill="#9cdcfe"/><rect x="29" y="142" width="1" height="1.25" fill="#ffd700"/><rect x="30" y="142" width="6" height="1.25" fill="#9cdcfe"/><rect x="37" y="142" width="1" height="1.25" fill="#d4d4d4"/><rect x="39" y="142" width="10" height="1.25" fill="#9cdcfe"/><rect x="49" y="142" width="1" height="1.25" fill="#ffd700"/><rect x="12" y="144" width="6" height="1.25" fill="#9cdcfe"/><rect x="19" y="144" width="1" height="1.25" fill="#d4d4d4"/><rect x="21" y="144" width="8" height="1.25" fill="#9cdcfe"/><rect x="29" y="144" width="1" height="1.25" fill="#ffd700"/><rect x="30" y="144" width="6" height="1.25" fill="#9cdcfe"/><rect x="37" y="144" width="1" height="1.25" fill="#d4d4d4"/><rect x="39" y="144" width="10" height="1.25" fill="#9cdcfe"/><rect x="49" y="144" width="1" height="1.25" fill="#ffd700"/><rect x="12" y="146" width="6" height="1.25" fill="#9cdcfe"/><rect x="19" y="146" width="1" height="1.25" fill="#d4d4d4"/><rect x="21" y="146" width="8" height="1.25" fill="#9cdcfe"/><rect x="29" y="146" width="1" height="1.25" fill="#ffd700"/><rect x="30" y="146" width="6" height="1.25" fill="#9cdcfe"/><rect x="37" y="146" width="1" height="1.25" fill="#d4d4d4"/><rect x="39" y="146" width="10" height="1.25" fill="#9cdcfe"/><rect x="49" y="146" width="1" height="1.25" fill="#ffd700"/><rect x="12" y="148" width="1" height="1.25" fill="#9cdcfe"/><rect x="13" y="148" width="1" height="1.25" fill="#d4d4d4"/><rect x="15" y="148" width="1" height="1.25" fill="#9cdcfe"/><rect x="16" y="148" width="1" height="1.25" fill="#d4d4d4"/><rect x="18" y="148" width="1" height="1.25" fill="#9cdcfe"/><rect x="20" y="148" width="1" height="1.25" fill="#d4d4d4"/><rect x="22" y="148" width="9" height="1.25" fill="#dcdcaa"/><rect x="31" y="148" width="1" height="1.25" fill="#ffd700"/><rect x="32" y="148" width="6" height="1.25" fill="#9cdcfe"/><rect x="38" y="148" width="1" height="1.25" fill="#d4d4d4"/><rect x="40" y="148" width="6" height="1.25" fill="#9cdcfe"/><rect x="46" y="148" width="1" height="1.25" fill="#d4d4d4"/><rect x="48" y="148" width="6" height="1.25" fill="#9cdcfe"/><rect x="54" y="148" width="1" height="1.25" fill="#ffd700"/><rect x="8" y="150" width="4" height="1.25" fill="#c586c0"/><rect x="12" y="150" width="1" height="1.25" fill="#d4d4d4"/><rect x="12" y="152" width="1" height="1.25" fill="#9cdcfe"/><rect x="13" y="152" width="1" height="1.25" fill="#d4d4d4"/><rect x="15" y="152" width="1" height="1.25" fill="#9cdcfe"/><rect x="16" y="152" width="1" height="1.25" fill="#d4d4d4"/><rect x="18" y="152" width="1" height="1.25" fill="#9cdcfe"/><rect x="20" y="152" width="1" height="1.25" fill="#d4d4d4"/><rect x="22" y="152" width="3" height="1.25" fill="#b5cea8"/><rect x="25" y="152" width="1" height="1.25" fill="#d4d4d4"/><rect x="27" y="152" width="3" height="1.25" fill="#b5cea8"/><rect x="30" y="152" width="1" height="1.25" fill="#d4d4d4"/><rect x="32" y="152" width="3" height="1.25" fill="#b5cea8"/><rect x="8" y="156" width="1" height="1.25" fill="#6a9955"/><rect x="10" y="156" width="7" height="1.25" fill="#6a9955"/><rect x="18" y="156" width="1" height="1.25" fill="#6a9955"/><rect x="20" y="156" width="1" height="1.25" fill="#6a9955"/><rect x="22" y="156" width="1" height="1.25" fill="#6a9955"/><rect x="24" y="156" width="1" height="1.25" fill="#6a9955"/><rect x="26" y="156" width="1" height="1.25" fill="#6a9955"/><rect x="28" y="156" width="1" height="1.25" fill="#6a9955"/><rect x="30" y="156" width="6" height="1.25" fill="#6a9955"/><rect x="37" y="156" width="10" height="1.25" fill="#6a9955"/><rect x="8" y="158" width="1" height="1.25" fill="#9cdcfe"/><rect x="9" y="158" width="1" height="1.25" fill="#d4d4d4"/><rect x="10" y="158" width="5" height="1.25" fill="#dcdcaa"/><rect x="15" y="158" width="1" height="1.25" fill="#ffd700"/><rect x="16" y="158" width="1" height="1.25" fill="#569cd6"/><rect x="17" y="158" width="1" height="1.25" fill="#ce9178"/><rect x="18" y="158" width="1" height="1.25" fill="#da70d6"/><rect x="19" y="158" width="1" height="1.25" fill="#9cdcfe"/><rect x="20" y="158" width="1" height="1.25" fill="#da70d6"/><rect x="22" y="158" width="1" height="1.25" fill="#da70d6"/><rect x="23" y="158" width="1" height="1.25" fill="#9cdcfe"/><rect x="24" y="158" width="1" height="1.25" fill="#da70d6"/><rect x="26" y="158" width="1" height="1.25" fill="#da70d6"/><rect x="27" y="158" width="1" height="1.25" fill="#9cdcfe"/><rect x="28" y="158" width="1" height="1.25" fill="#da70d6"/><rect x="30" y="158" width="1" height="1.25" fill="#da70d6"/><rect x="31" y="158" width="1" height="1.25" fill="#9cdcfe"/><rect x="32" y="158" width="1" height="1.25" fill="#da70d6"/><rect x="34" y="158" width="1" height="1.25" fill="#da70d6"/><rect x="35" y="158" width="1" height="1.25" fill="#9cdcfe"/><rect x="36" y="158" width="1" height="1.25" fill="#da70d6"/><rect x="38" y="158" width="1" height="1.25" fill="#da70d6"/><rect x="39" y="158" width="1" height="1.25" fill="#9cdcfe"/><rect x="40" y="158" width="1" height="1.25" fill="#da70d6"/><rect x="41" y="158" width="2" height="1.25" fill="#d4d4d4"/><rect x="43" y="158" width="1" height="1.25" fill="#ce9178"/><rect x="44" y="158" width="1" height="1.25" fill="#ffd700"/><rect x="8" y="162" width="2" height="1.25" fill="#c586c0"/><rect x="11" y="162" width="1" height="1.25" fill="#9cdcfe"/><rect x="13" y="162" width="1" height="1.25" fill="#d4d4d4"/><rect x="15" y="162" width="6" height="1.25" fill="#b5cea8"/><rect x="22" y="162" width="2" height="1.25" fill="#d4d4d4"/><rect x="25" y="162" width="1" height="1.25" fill="#b5cea8"/><rect x="26" y="162" width="1" height="1.25" fill="#d4d4d4"/><rect x="12" y="164" width="5" height="1.25" fill="#dcdcaa"/><rect x="17" y="164" width="1" height="1.25" fill="#ffd700"/><rect x="18" y="164" width="1" height="1.25" fill="#569cd6"/><rect x="19" y="164" width="1" height="1.25" fill="#ce9178"/><rect x="22" y="164" width="9" height="1.25" fill="#ce9178"/><rect x="32" y="164" width="1" height="1.25" fill="#da70d6"/><rect x="33" y="164" width="1" height="1.25" fill="#9cdcfe"/><rect x="34" y="164" width="1" height="1.25" fill="#da70d6"/><rect x="35" y="164" width="1" height="1.25" fill="#ce9178"/><rect x="36" y="164" width="1" height="1.25" fill="#da70d6"/><rect x="37" y="164" width="12" height="1.25" fill="#9cdcfe"/><rect x="49" y="164" width="1" height="1.25" fill="#da70d6"/><rect x="51" y="164" width="12" height="1.25" fill="#ce9178"/><rect x="63" y="164" width="1" height="1.25" fill="#ffd700"/><rect x="0" y="168" width="5" height="1.25" fill="#dcdcaa"/><rect x="5" y="168" width="1" height="1.25" fill="#ffd700"/><rect x="6" y="168" width="1" height="1.25" fill="#569cd6"/><rect x="7" y="168" width="6" height="1.25" fill="#ce9178"/><rect x="14" y="168" width="3" height="1.25" fill="#ce9178"/><rect x="18" y="168" width="4" height="1.25" fill="#ce9178"/><rect x="23" y="168" width="7" height="1.25" fill="#ce9178"/><rect x="31" y="168" width="3" height="1.25" fill="#ce9178"/><rect x="35" y="168" width="1" height="1.25" fill="#da70d6"/><rect x="36" y="168" width="11" height="1.25" fill="#4fc1ff"/><rect x="47" y="168" width="1" height="1.25" fill="#da70d6"/><rect x="48" y="168" width="1" height="1.25" fill="#ce9178"/><rect x="49" y="168" width="1" height="1.25" fill="#ffd700"/></svg>
<div class="a" style="left:1400px;top:128px;width:120px;height:136px;background:rgba(121,121,121,.0)"></div>
<div class="a" style="left:1520px;top:92px;width:1px;height:1279px;background:#111214"></div>
<div class="a" style="left:1520px;top:92px;width:13px;height:1px;background:#111214"></div>
<div class="a" style="left:1520px;top:250px;width:13px;height:564px;background:#434343"></div>
<div class="a" style="left:1521px;top:351px;width:12px;height:2px;background:#878784"></div>
<div class="a" style="left:48px;top:92px;width:1352px;height:6px;box-shadow:#000 0 6px 6px -6px inset"></div>
<div class="a" style="left:0;top:0;width:1534px;height:35px;background:#181818;border-bottom:1px solid #2b2b2b"></div>
<svg style="left:10px;top:9px" width="16" height="16" viewBox="0 0 24 24"><path fill="#1a8fdc" d="M23.15 2.587L18.21.21a1.494 1.494 0 0 0-1.705.29l-9.46 8.63-4.12-3.128a.999.999 0 0 0-1.276.057L.327 7.261A1 1 0 0 0 .326 8.74L3.899 12 .326 15.26a1 1 0 0 0 .001 1.479L1.65 17.94a.999.999 0 0 0 1.276.057l4.12-3.128 9.46 8.63a1.492 1.492 0 0 0 1.704.29l4.942-2.377A1.5 1.5 0 0 0 24 20.06V3.939a1.5 1.5 0 0 0-.85-1.352zm-5.146 14.861L10.826 12l7.178-5.448v10.896z"/><path fill="#2aa8f5" d="M18.004.06 a1.5 1.5 0 0 1 .2.15L23.15 2.587A1.5 1.5 0 0 1 24 3.939V20.06a1.5 1.5 0 0 1-.85 1.352l-4.942 2.377a1.49 1.49 0 0 1-.2.08z"/></svg>
<span class="t" style="left:42.70px;top:7.50px;font-size:13px;color:#cccccc;letter-spacing:-0.237px;">File</span>
<span class="t" style="left:77.80px;top:7.50px;font-size:13px;color:#cccccc;letter-spacing:0.049px;">Edit</span>
<span class="t" style="left:115.50px;top:7.50px;font-size:13px;color:#cccccc;letter-spacing:-0.031px;">Selection</span>
<span class="t" style="left:183.70px;top:7.50px;font-size:13px;color:#cccccc;letter-spacing:0.039px;">View</span>
<span class="t" style="left:227.90px;top:7.50px;font-size:13px;color:#cccccc;letter-spacing:-0.371px;">Go</span>
<span class="t" style="left:260.00px;top:7.50px;font-size:13px;color:#cccccc;letter-spacing:-0.417px;">Run</span>
<span class="t" style="left:298.70px;top:7.50px;font-size:13px;color:#cccccc;letter-spacing:-0.054px;">Terminal</span>
<span class="t" style="left:363.00px;top:7.50px;font-size:13px;color:#cccccc;letter-spacing:0.065px;">Help</span>
<svg style="left:426px;top:9px" width="16" height="16" viewBox="0 0 16 16"><g fill="none" stroke="#cccccc" stroke-width="1.2"><path d="M7 3.4 L2.4 8 L7 12.6 M2.4 8 H14.4"/></g></svg>
<svg style="left:452px;top:9px" width="16" height="16" viewBox="0 0 16 16"><g transform="translate(16,0) scale(-1,1)" fill="none" stroke="#6b6b6b" stroke-width="1.2"><path d="M7 3.4 L2.4 8 L7 12.6 M2.4 8 H14.4"/></g></svg>
<div class="a" style="left:481px;top:5px;width:585px;height:24px;background:#242424;border:1px solid #3a3a3a;border-radius:6px"></div>
<svg style="left:747px;top:9px" width="16" height="16" viewBox="0 0 16 16"><g fill="none" stroke="#cccccc" stroke-width="1.2"><circle cx="6.6" cy="6.8" r="4.6"/><path d="M10 10.2 L14 14.4"/></g></svg>
<span class="t" style="left:766.50px;top:7.50px;font-size:13px;color:#cccccc;letter-spacing:-0.866px;">Search</span>
<svg style="left:1078px;top:8px" width="18" height="18" viewBox="0 0 18 18"><g fill="none" stroke="#cccccc" stroke-width="1.2" stroke-linejoin="round"><path d="M9.6 3.4 H3.2 a1.7 1.7 0 0 0 -1.7 1.7 V10.8 a1.7 1.7 0 0 0 1.7 1.7 H3.8 V15.4 L7.4 12.5 H12.8 a1.7 1.7 0 0 0 1.7 -1.7 V10"/></g><path fill="#d8d8d8" d="M12.4 0.4 l0.8 2.2 2.2 0.8 -2.2 0.8 -0.8 2.2 -0.8 -2.2 -2.2 -0.8 2.2 -0.8z"/><path fill="#d8d8d8" d="M15.3 4.9 l0.6 1.5 1.5 0.6 -1.5 0.6 -0.6 1.5 -0.6 -1.5 -1.5 -0.6 1.5 -0.6z"/></svg>
<svg style="left:1098.6px;top:14px" width="9" height="7" viewBox="0 0 9 7"><path fill="none" stroke="#cccccc" stroke-width="1.2" d="M0.6 1 L4.4 4.8 L8.2 1"/></svg>
<svg style="left:1295px;top:9px" width="16" height="16" viewBox="0 0 16 16"><g fill="none" stroke="#cccccc" stroke-width="1.1"><rect x="1.6" y="1.6" width="5" height="12.8" rx="1"/><rect x="9.4" y="1.6" width="5" height="5" rx="1"/><rect x="9.4" y="9.4" width="5" height="5" rx="1"/></g></svg>
<svg style="left:1321px;top:9px" width="16" height="16" viewBox="0 0 16 16"><g fill="none" stroke="#cccccc" stroke-width="1.1"><rect x="1.2" y="1.6" width="13.6" height="12.8" rx="2"/><path d="M6 1.6 V14.4"/></g></svg>
<svg style="left:1347px;top:9px" width="16" height="16" viewBox="0 0 16 16"><g fill="none" stroke="#cccccc" stroke-width="1.1"><rect x="1.2" y="1.6" width="13.6" height="12.8" rx="2"/><path d="M1.2 10 H14.8"/></g></svg>
<svg style="left:1373px;top:9px" width="16" height="16" viewBox="0 0 16 16"><g fill="none" stroke="#cccccc" stroke-width="1.1"><rect x="1.2" y="1.6" width="13.6" height="12.8" rx="2"/><path d="M10 1.6 V14.4"/></g></svg>
<div class="a" style="left:1413px;top:16px;width:10px;height:1px;background:#cccccc"></div>
<div class="a" style="left:1459px;top:12px;width:10px;height:10px;border:1px solid #cccccc;border-radius:1px"></div>
<svg style="left:1505px;top:12px" width="10" height="10" viewBox="0 0 10 10"><path stroke="#cccccc" stroke-width="1" d="M0 0 L10 10 M10 0 L0 10"/></svg>
<div class="a" style="left:48px;top:35px;width:1486px;height:35px;background:#181818;border-bottom:1px solid #2b2b2b"></div>
<div class="a" style="left:282px;top:35px;width:1px;height:34px;background:#2b2b2b"></div>
<svg style="left:62px;top:45.8px" width="12" height="12" viewBox="0 0 16 16"><path fill="#3c85b8" stroke="#3c85b8" stroke-width=".5" d="M7.9 0.6 C5 0.6 5.2 1.9 5.2 1.9 V4.2 H8 V4.9 H3.2 C3.2 4.9 0.9 4.7 0.9 8 C0.9 11.3 2.9 11.1 2.9 11.1 H4.4 V9.1 C4.4 9.1 4.3 7.3 6.2 7.3 H9.3 C9.3 7.3 11 7.3 11 5.6 V2.4 C11 2.4 11.3 0.6 7.9 0.6 Z"/><path fill="#4e9fd0" stroke="#4e9fd0" stroke-width=".5" d="M8.1 15.4 C11 15.4 10.8 14.1 10.8 14.1 V11.8 H8 V11.1 H12.8 C12.8 11.1 15.1 11.3 15.1 8 C15.1 4.7 13.1 4.9 13.1 4.9 H11.6 V6.9 C11.6 6.9 11.7 8.7 9.8 8.7 H6.7 C6.7 8.7 5 8.7 5 10.4 V13.6 C5 13.6 4.7 15.4 8.1 15.4 Z"/><circle cx="6.6" cy="2.4" r="0.7" fill="#181818"/><circle cx="9.4" cy="13.6" r="0.7" fill="#181818"/></svg>
<span class="t" style="left:80.00px;top:43.80px;font-size:13px;color:#9d9d9d;letter-spacing:-0.138px;">convert_postshot_to_unreal.py</span>
<div class="a" style="left:283px;top:35px;width:226px;height:35px;background:#1f1f1f;border-top:1px solid #0078d4"></div>
<div class="a" style="left:509px;top:35px;width:1px;height:34px;background:#2b2b2b"></div>
<svg style="left:297px;top:45.8px" width="12" height="12" viewBox="0 0 16 16"><path fill="#3c85b8" stroke="#3c85b8" stroke-width=".5" d="M7.9 0.6 C5 0.6 5.2 1.9 5.2 1.9 V4.2 H8 V4.9 H3.2 C3.2 4.9 0.9 4.7 0.9 8 C0.9 11.3 2.9 11.1 2.9 11.1 H4.4 V9.1 C4.4 9.1 4.3 7.3 6.2 7.3 H9.3 C9.3 7.3 11 7.3 11 5.6 V2.4 C11 2.4 11.3 0.6 7.9 0.6 Z"/><path fill="#4e9fd0" stroke="#4e9fd0" stroke-width=".5" d="M8.1 15.4 C11 15.4 10.8 14.1 10.8 14.1 V11.8 H8 V11.1 H12.8 C12.8 11.1 15.1 11.3 15.1 8 C15.1 4.7 13.1 4.9 13.1 4.9 H11.6 V6.9 C11.6 6.9 11.7 8.7 9.8 8.7 H6.7 C6.7 8.7 5 8.7 5 10.4 V13.6 C5 13.6 4.7 15.4 8.1 15.4 Z"/><circle cx="6.6" cy="2.4" r="0.7" fill="#181818"/><circle cx="9.4" cy="13.6" r="0.7" fill="#181818"/></svg>
<span class="t" style="left:314.50px;top:43.80px;font-size:13px;color:#ffffff;letter-spacing:-0.347px;">convert_gs_to_xyz.py</span>
<span class="t" style="left:439.70px;top:43.80px;font-size:12px;color:#b0b0b0;letter-spacing:-0.107px;">F:\...\ply</span>
<svg style="left:490px;top:47.5px" width="10" height="10" viewBox="0 0 10 10"><path stroke="#ffffff" stroke-width="1.2" d="M0.3 0.3 L9.7 9.7 M9.7 0.3 L0.3 9.7"/></svg>
<svg style="left:524.3px;top:45.8px" width="12" height="12" viewBox="0 0 16 16"><path fill="#3c85b8" stroke="#3c85b8" stroke-width=".5" d="M7.9 0.6 C5 0.6 5.2 1.9 5.2 1.9 V4.2 H8 V4.9 H3.2 C3.2 4.9 0.9 4.7 0.9 8 C0.9 11.3 2.9 11.1 2.9 11.1 H4.4 V9.1 C4.4 9.1 4.3 7.3 6.2 7.3 H9.3 C9.3 7.3 11 7.3 11 5.6 V2.4 C11 2.4 11.3 0.6 7.9 0.6 Z"/><path fill="#4e9fd0" stroke="#4e9fd0" stroke-width=".5" d="M8.1 15.4 C11 15.4 10.8 14.1 10.8 14.1 V11.8 H8 V11.1 H12.8 C12.8 11.1 15.1 11.3 15.1 8 C15.1 4.7 13.1 4.9 13.1 4.9 H11.6 V6.9 C11.6 6.9 11.7 8.7 9.8 8.7 H6.7 C6.7 8.7 5 8.7 5 10.4 V13.6 C5 13.6 4.7 15.4 8.1 15.4 Z"/><circle cx="6.6" cy="2.4" r="0.7" fill="#181818"/><circle cx="9.4" cy="13.6" r="0.7" fill="#181818"/></svg>
<span class="t" style="left:541.80px;top:43.80px;font-size:13px;color:#9d9d9d;letter-spacing:-0.317px;">convert_gs_to_xyz.py</span>
<span class="t" style="left:667.00px;top:44.00px;font-size:12px;color:#666666;letter-spacing:0.000px;">C:</span>
<div class="a" style="left:677px;top:35px;width:180px;height:30px;background:#181818;border:1px solid #313131;border-radius:5px"></div>
<svg style="left:686.6px;top:45px" width="7" height="11" viewBox="0 0 7 11"><rect x="0" y="0" width="2.2" height="2.2" fill="#8c8c8c"/><rect x="0" y="4" width="2.2" height="2.2" fill="#8c8c8c"/><rect x="0" y="8" width="2.2" height="2.2" fill="#8c8c8c"/><rect x="4.3" y="0" width="2.2" height="2.2" fill="#8c8c8c"/><rect x="4.3" y="4" width="2.2" height="2.2" fill="#8c8c8c"/><rect x="4.3" y="8" width="2.2" height="2.2" fill="#8c8c8c"/></svg>
<svg style="left:703px;top:42px" width="16" height="16" viewBox="0 0 16 16"><g fill="none" stroke="#75beff" stroke-width="1.7" stroke-linejoin="round"><path d="M2.9 2.3 V14.1"/><path d="M7 3 V13.4 L14.3 8.2 Z"/></g></svg>
<svg style="left:729px;top:42px" width="16" height="16" viewBox="0 0 16 16"><g fill="none" stroke="#75beff" stroke-width="1.7"><path d="M2.6 9.4 A5.7 5.7 0 0 1 13.4 6.8"/><path d="M13.9 2.4 V7 H9.4"/></g><circle cx="8" cy="13" r="2.1" fill="#75beff"/></svg>
<svg style="left:755px;top:42px" width="16" height="16" viewBox="0 0 16 16"><g fill="none" stroke="#75beff" stroke-width="1.7"><path d="M8 1 V9.4"/><path d="M3.6 5 L8 9.6 L12.4 5"/></g><circle cx="8" cy="13" r="2.1" fill="#75beff"/></svg>
<svg style="left:781px;top:42px" width="16" height="16" viewBox="0 0 16 16"><g fill="none" stroke="#75beff" stroke-width="1.7"><path d="M8 10 V1.8"/><path d="M3.6 6.2 L8 1.6 L12.4 6.2"/></g><circle cx="8" cy="13" r="2.1" fill="#75beff"/></svg>
<svg style="left:807px;top:42px" width="16" height="16" viewBox="0 0 16 16"><g fill="none" stroke="#89d185" stroke-width="1.7"><path d="M3.6 5.6 A5.3 5.3 0 1 1 2.6 9.2"/><path d="M2.6 2 V6.2 H6.8"/></g></svg>
<div class="a" style="left:835px;top:44.2px;width:12.4px;height:12.4px;border:2px solid #f48771;border-radius:1px"></div>
<div class="a" style="left:864px;top:35px;width:1px;height:34px;background:#2b2b2b"></div>
<div class="a" style="left:1351px;top:35px;width:1px;height:34px;background:#2b2b2b"></div>
<svg style="left:881.5px;top:46.5px" width="10" height="11" viewBox="0 0 10 11"><g fill="#c5c5c5"><rect x="0" y="0" width="9.2" height="1.4"/><rect x="0" y="3" width="6" height="1.4"/><rect x="0" y="6" width="9.2" height="1.4"/><rect x="0" y="9" width="6.6" height="1.4"/></g></svg>
<div class="a" style="left:900px;top:53px;width:365.5px;height:2px;background:#bdbdbd"></div>
<div class="a" style="left:900px;top:53px;width:1.4px;height:9px;background:#b0b0b0"></div>
<div class="a" style="left:955.5px;top:53px;width:1.4px;height:9px;background:#b0b0b0"></div>
<div class="a" style="left:1130.8px;top:53px;width:1.4px;height:9px;background:#b0b0b0"></div>
<span class="t" style="left:1270.50px;top:43.80px;font-size:13px;color:#808080;letter-spacing:-0.314px;">Untitled-2</span>
<div class="a" style="left:1333px;top:48.5px;width:8.4px;height:8.4px;border-radius:50%;background:#a6a6a6"></div>
<svg style="left:1369px;top:46.5px" width="10" height="11" viewBox="0 0 10 11"><g fill="#c5c5c5"><rect x="0" y="0" width="9.2" height="1.4"/><rect x="0" y="3" width="6" height="1.4"/><rect x="0" y="6" width="9.2" height="1.4"/><rect x="0" y="9" width="6.6" height="1.4"/></g></svg>
<span class="t" style="left:1385.50px;top:43.80px;font-size:13px;color:#9d9d9d;letter-spacing:-0.228px;">&lt;div cla:</span>
<svg style="left:1439px;top:44.5px" width="16" height="16" viewBox="0 0 16 16"><path fill="none" stroke="#d0d0d0" stroke-width="1.2" stroke-linejoin="round" d="M3 2.2 V13.8 L13 8 Z"/></svg>
<svg style="left:1458px;top:49px" width="9" height="8" viewBox="0 0 9 8"><path fill="none" stroke="#d0d0d0" stroke-width="1.2" d="M0.8 1.4 L4.4 5.2 L8 1.4"/></svg>
<svg style="left:1477px;top:44.5px" width="16" height="16" viewBox="0 0 16 16"><g fill="none" stroke="#d0d0d0" stroke-width="1.2"><rect x="1.4" y="1.8" width="13.2" height="12.4" rx="1.6"/><path d="M8 1.8 V14.2"/></g></svg>
<div class="a" style="left:1506px;top:51.8px;width:2px;height:2px;border-radius:50%;background:#d0d0d0"></div>
<div class="a" style="left:1510.2px;top:51.8px;width:2px;height:2px;border-radius:50%;background:#d0d0d0"></div>
<div class="a" style="left:1514.4px;top:51.8px;width:2px;height:2px;border-radius:50%;background:#d0d0d0"></div>
<div class="a" style="left:48px;top:70px;width:1486px;height:22px;background:#1f1f1f"></div>
<span class="t" style="left:63.80px;top:71.50px;font-size:13px;color:#a9a9a9;letter-spacing:-1.176px;">F:</span>
<span class="t" style="left:88.80px;top:71.50px;font-size:13px;color:#a9a9a9;letter-spacing:-0.095px;">Project</span>
<span class="t" style="left:144.60px;top:71.50px;font-size:13px;color:#a9a9a9;letter-spacing:-0.955px;">SCAD</span>
<span class="t" style="left:193.20px;top:71.50px;font-size:13px;color:#a9a9a9;letter-spacing:-0.746px;">VFX775</span>
<span class="t" style="left:252.30px;top:71.50px;font-size:13px;color:#a9a9a9;letter-spacing:-0.591px;">RawAssets</span>
<span class="t" style="left:327.90px;top:71.50px;font-size:13px;color:#a9a9a9;letter-spacing:0.460px;">ply</span>
<span class="t" style="left:383.00px;top:71.50px;font-size:13px;color:#a9a9a9;letter-spacing:-0.322px;">convert_gs_to_xyz.py</span>
<span class="t" style="left:519.10px;top:71.50px;font-size:13px;color:#a9a9a9;letter-spacing:-0.711px;">...</span>
<svg style="left:77.2px;top:77.3px" width="8" height="9" viewBox="0 0 8 9"><path fill="none" stroke="#a9a9a9" stroke-width="1.3" d="M1 0.6 L6.4 4.5 L1 8.4"/></svg>
<svg style="left:133.7px;top:77.3px" width="8" height="9" viewBox="0 0 8 9"><path fill="none" stroke="#a9a9a9" stroke-width="1.3" d="M1 0.6 L6.4 4.5 L1 8.4"/></svg>
<svg style="left:182.7px;top:77.3px" width="8" height="9" viewBox="0 0 8 9"><path fill="none" stroke="#a9a9a9" stroke-width="1.3" d="M1 0.6 L6.4 4.5 L1 8.4"/></svg>
<svg style="left:240.7px;top:77.3px" width="8" height="9" viewBox="0 0 8 9"><path fill="none" stroke="#a9a9a9" stroke-width="1.3" d="M1 0.6 L6.4 4.5 L1 8.4"/></svg>
<svg style="left:317.7px;top:77.3px" width="8" height="9" viewBox="0 0 8 9"><path fill="none" stroke="#a9a9a9" stroke-width="1.3" d="M1 0.6 L6.4 4.5 L1 8.4"/></svg>
<svg style="left:350.7px;top:77.3px" width="8" height="9" viewBox="0 0 8 9"><path fill="none" stroke="#a9a9a9" stroke-width="1.3" d="M1 0.6 L6.4 4.5 L1 8.4"/></svg>
<svg style="left:507.7px;top:77.3px" width="8" height="9" viewBox="0 0 8 9"><path fill="none" stroke="#a9a9a9" stroke-width="1.3" d="M1 0.6 L6.4 4.5 L1 8.4"/></svg>
<svg style="left:365.5px;top:75.5px" width="11.5" height="11.5" viewBox="0 0 16 16"><path fill="#3c85b8" stroke="#3c85b8" stroke-width=".5" d="M7.9 0.6 C5 0.6 5.2 1.9 5.2 1.9 V4.2 H8 V4.9 H3.2 C3.2 4.9 0.9 4.7 0.9 8 C0.9 11.3 2.9 11.1 2.9 11.1 H4.4 V9.1 C4.4 9.1 4.3 7.3 6.2 7.3 H9.3 C9.3 7.3 11 7.3 11 5.6 V2.4 C11 2.4 11.3 0.6 7.9 0.6 Z"/><path fill="#4e9fd0" stroke="#4e9fd0" stroke-width=".5" d="M8.1 15.4 C11 15.4 10.8 14.1 10.8 14.1 V11.8 H8 V11.1 H12.8 C12.8 11.1 15.1 11.3 15.1 8 C15.1 4.7 13.1 4.9 13.1 4.9 H11.6 V6.9 C11.6 6.9 11.7 8.7 9.8 8.7 H6.7 C6.7 8.7 5 8.7 5 10.4 V13.6 C5 13.6 4.7 15.4 8.1 15.4 Z"/><circle cx="6.6" cy="2.4" r="0.7" fill="#181818"/><circle cx="9.4" cy="13.6" r="0.7" fill="#181818"/></svg>
<div class="a" style="left:0;top:35px;width:48px;height:1336px;background:#181818;border-right:1px solid #2b2b2b"></div>
<svg style="left:0;top:0" width="48" height="1392" viewBox="0 0 48 1392"><g fill="none" stroke="#868686" stroke-width="1.45" stroke-linejoin="round" stroke-linecap="round"><path d="M19.8 47.7 H26 L32.4 54.1 V64.5 a2 2 0 0 1 -2 2 H19.8 a2 2 0 0 1 -2 -2 V49.7 a2 2 0 0 1 2 -2 Z"/><path d="M25.7 48 V52.8 a1.6 1.6 0 0 0 1.6 1.6 H32.2"/><path d="M15.8 50.6 a2.4 2.4 0 0 0 -2 2.4 V66 a4 4 0 0 0 4 4 H27 a2.4 2.4 0 0 0 2.3 -1.7"/><circle cx="22.1" cy="104.6" r="8"/><path d="M27.9 110.4 L34.2 117.1"/><circle cx="18.6" cy="146.5" r="2.9"/><circle cx="18.6" cy="163" r="2.9"/><circle cx="29.5" cy="151" r="2.9"/><path d="M18.6 149.4 V160.1"/><path d="M29.5 153.9 V155 a3 3 0 0 1 -3 3 H21.6 a3 3 0 0 0 -3 2.2"/><path d="M17.2 201.3 V195.4 a0.9 0.9 0 0 1 1.4 -0.8 L33.4 202.6"/><path d="M15.1 208.4 a3.5 3.5 0 0 1 7 0 V210.4 a3.5 3.5 0 0 1 -7 0 Z" /><path d="M15.1 207.4 H22.1 M16.6 205 a2.2 2.2 0 0 1 4 0 M15.1 209.6 H11.8 M22.1 209.6 H25 M15.4 206.2 L12.4 203.8 M21.8 206.2 L24.6 203.8 M15.6 212.2 L12.4 214.4 M21.6 212.2 L24.6 214.4"/><path d="M13.9 243.9 a1.6 1.6 0 0 1 1.6 -1.6 H23.3 V261.2 H15.5 a1.6 1.6 0 0 1 -1.6 -1.6 Z"/><path d="M13.9 251.9 H33.1 V259.6 a1.6 1.6 0 0 1 -1.6 1.6 H23.3"/><rect x="25.4" y="242.6" width="7.8" height="7.8" rx="1.3" transform="rotate(45 29.3 246.5)"/><path d="M17.2 289.1 H30.9"/><path d="M20.3 289.3 V296.6 L15.4 306.6 a1.4 1.4 0 0 0 1.3 2 H31.4 a1.4 1.4 0 0 0 1.3 -2 L27.8 296.6 V289.3"/><path d="M17.4 303.5 H30.8"/><circle cx="24" cy="1297.9" r="10.3"/><circle cx="24" cy="1293.8" r="2.3" fill="#868686"/><path fill="#868686" d="M18.9 1299.9 a1 1 0 0 1 1 -1 H28.1 a1 1 0 0 1 1 1 C29.1 1302.4 26.8 1303.7 24 1303.7 C21.2 1303.7 18.9 1302.4 18.9 1299.5 Z"/><path d="M21.70 1339.08 L21.99 1335.90 L26.01 1335.90 L26.30 1339.08 L28.67 1340.45 L31.57 1339.11 L33.58 1342.59 L30.97 1344.43 L30.97 1347.17 L33.58 1349.01 L31.57 1352.49 L28.67 1351.15 L26.30 1352.52 L26.01 1355.70 L21.99 1355.70 L21.70 1352.52 L19.33 1351.15 L16.43 1352.49 L14.42 1349.01 L17.03 1347.17 L17.03 1344.43 L14.42 1342.59 L16.43 1339.11 L19.33 1340.45 Z"/><circle cx="24" cy="1345.8" r="2.2"/></g></svg>
<div class="a" style="left:24px;top:59px;width:16px;height:16px;border-radius:8px;background:#0078d4;color:#fff;font-size:9.5px;line-height:16px;text-align:center">2</div>
<div class="a" style="left:24px;top:203px;width:16px;height:16px;border-radius:8px;background:#0078d4;color:#fff;font-size:9.5px;line-height:16px;text-align:center">1</div>
<div class="a" style="left:0;top:1370px;width:1534px;height:22px;background:#0078d4;border-top:1px solid #2a231f"></div>
<svg style="left:8px;top:1373px" width="16" height="16" viewBox="0 0 16 16"><g fill="none" stroke="#fff" stroke-width="1.3"><path d="M3 6.2 L8.2 10.4 L3 14.6"/><path d="M13.2 1.6 L8.4 5.4 L13.2 9.2"/></g></svg>
<svg style="left:40px;top:1373px" width="16" height="16" viewBox="0 0 16 16"><g fill="none" stroke="#fff" stroke-width="1.2"><circle cx="8" cy="8" r="6.6"/><path d="M5.4 5.4 L10.6 10.6 M10.6 5.4 L5.4 10.6"/></g></svg>
<span class="t" style="left:59.30px;top:1371.50px;font-size:12px;color:#ffffff;letter-spacing:-0.274px;">0</span>
<svg style="left:69px;top:1373px" width="16" height="16" viewBox="0 0 16 16"><g fill="none" stroke="#fff" stroke-width="1.2" stroke-linejoin="round"><path d="M8 1.8 L15 14.2 H1 Z"/><path d="M8 6 V10.4 M8 11.6 V12.8"/></g></svg>
<span class="t" style="left:88.50px;top:1371.50px;font-size:12px;color:#ffffff;letter-spacing:-0.174px;">0</span>
<svg style="left:110px;top:1374px" width="16" height="16" viewBox="0 0 16 16"><g fill="none" stroke="#fff" stroke-width="1.2" stroke-linejoin="round"><path d="M5 3.8 V1.6 L14.6 7.6 L9.4 10.8"/><ellipse cx="4.6" cy="11" rx="2.2" ry="3"/><path d="M2.6 8.6 L1 7.2 M6.6 8.6 L8.2 7.2 M2.4 11 H0.4 M6.8 11 H8.8 M2.8 13.2 L1.2 14.8 M6.4 13.2 L8 14.8"/></g></svg>
<span class="t" style="left:1018.50px;top:1371.50px;font-size:12px;color:#ffffff;letter-spacing:-0.207px;">Ln 32, Col 49</span>
<span class="t" style="left:1102.80px;top:1371.50px;font-size:12px;color:#ffffff;letter-spacing:-0.463px;">Spaces: 4</span>
<span class="t" style="left:1167.30px;top:1371.50px;font-size:12px;color:#ffffff;letter-spacing:-0.259px;">UTF-8</span>
<span class="t" style="left:1215.20px;top:1371.50px;font-size:12px;color:#ffffff;letter-spacing:-1.134px;">CRLF</span>
<span class="t" style="left:1279.50px;top:1371.50px;font-size:12px;color:#ffffff;letter-spacing:-0.060px;">Python</span>
<span class="t" style="left:1364.40px;top:1371.50px;font-size:12px;color:#ffffff;letter-spacing:-0.090px;">3.12.10 (Microsoft Store)</span>
<span class="t" style="left:1258.20px;top:1371.00px;font-size:13px;color:#ffffff;letter-spacing:0.735px;">{ }</span>
<svg style="left:1332.5px;top:1374px" width="17" height="14" viewBox="0 0 17 14"><path fill="#fff" fill-rule="evenodd" d="M5.6 0 H11.4 A2.8 2.8 0 0 1 14.2 2.8 V5.2 C15.8 5.8 17 7.2 17 9.2 C17 12 13 14 8.5 14 C4 14 0 12 0 9.2 C0 7.2 1.2 5.8 2.8 5.2 V2.8 A2.8 2.8 0 0 1 5.6 0 Z M5.2 1.8 A1 1 0 0 0 4.2 2.8 V4.2 A1 1 0 0 0 5.2 5.2 H6.8 A1 1 0 0 0 7.8 4.2 V2.8 A1 1 0 0 0 6.8 1.8 Z M10.2 1.8 A1 1 0 0 0 9.2 2.8 V4.2 A1 1 0 0 0 10.2 5.2 H11.8 A1 1 0 0 0 12.8 4.2 V2.8 A1 1 0 0 0 11.8 1.8 Z M6.2 8 V10.8 H7.6 V8 Z M9.6 8 V10.8 H11 V8 Z"/></svg>
<svg style="left:1510px;top:1373px" width="16" height="16" viewBox="0 0 16 16"><g fill="none" stroke="#fff" stroke-width="1.2" stroke-linejoin="round"><path d="M8.4 1.5 C5.2 1.5 4 3.8 4 6.4 V9.8 L2.4 12.7 H14 L12.7 10 V7.6"/><path d="M6.6 13 a1.7 1.7 0 0 0 3.4 0"/></g><circle cx="12.3" cy="3.8" r="3.2" fill="#fff"/></svg>
<div class="a" style="left:0;top:0;width:1534px;height:1392px;border:1px solid #808080;pointer-events:none"></div>
</div></body></html>
